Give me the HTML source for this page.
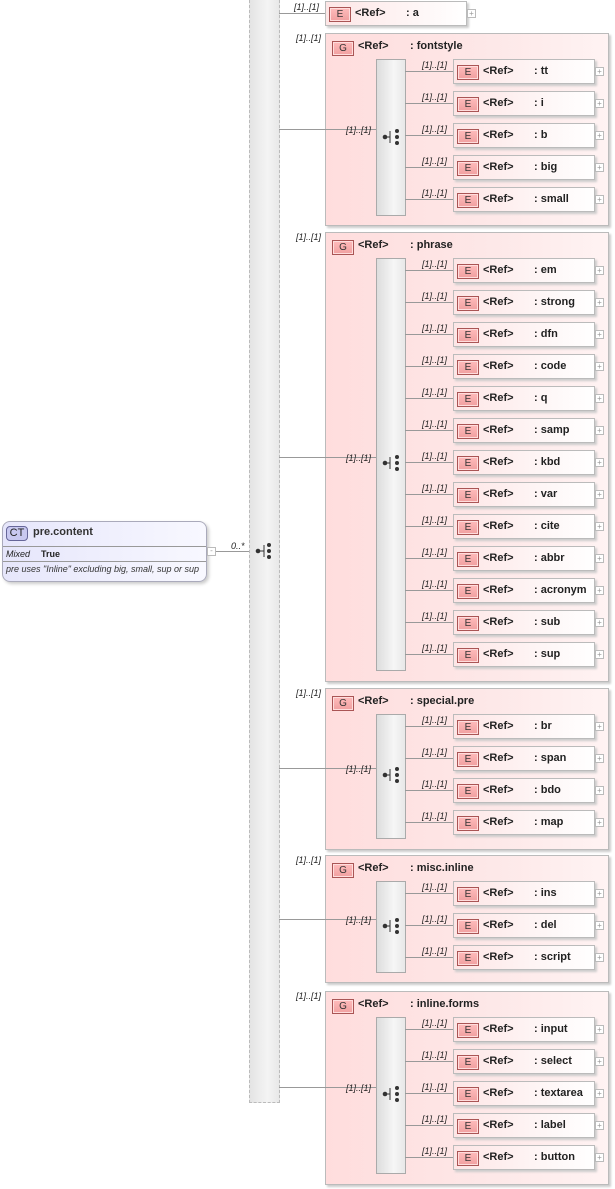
<!DOCTYPE html>
<html><head><meta charset="utf-8"><style>
*{box-sizing:border-box;margin:0;padding:0}
body{width:615px;height:1189px;background:#fff;position:relative;overflow:hidden;font-family:"Liberation Sans",sans-serif;font-size:11px;color:#222}
.a{position:absolute}
.lbl{position:absolute;font-style:italic;font-size:9px;color:#222;white-space:nowrap}
.hl{position:absolute;height:1px;background:#999}
.el{position:absolute;width:142px;height:25px;border:1px solid #bbb;background:linear-gradient(90deg,#fde6e6,#fff);box-shadow:2px 2px 2px #ccc}
.e{position:absolute;left:3px;top:5px;width:22px;height:15px;border:1px solid #a55;background:linear-gradient(#fbb,#f0a0a0);font-size:10px;text-align:center;line-height:13px;color:#333;box-shadow:inset 0 0 0 1px #fdd}
.r{position:absolute;left:29px;top:5px;font-weight:bold}
.n{position:absolute;left:80px;top:5px;font-weight:bold}
.pl{position:absolute;width:9px;height:9px;border:1px solid #bbb;background:#fff;font-size:8px;line-height:7px;text-align:center;color:#999}
.row{position:absolute;left:405px;width:210px;height:26px}
.row .hl{left:0;top:12px;width:48px}
.row .lbl{left:17px;top:1px}
.row .el{left:48px;top:0}
.row .pl{left:190px;top:8px}
.grp{position:absolute;left:325px;width:284px;border:1px solid #bbb;background:linear-gradient(90deg,#fdd 0%,#fde8e8 60%,#fff3f3 100%);box-shadow:2px 2px 2px #ccc}
.grp .g{left:6px;top:7px}
.grp .r{left:32px;top:6px}
.grp .n{left:84px;top:6px}
.bar{position:absolute;left:50px;width:30px;border:1px solid #aaa;background:linear-gradient(90deg,#ddd,#f6f6f6 60%,#e8e8e8)}
svg.ic{position:absolute}
</style></head><body>
<div class="a" style="left:249px;top:0;width:31px;height:1103px;border:1px dashed #bbb;border-top:none;background:linear-gradient(90deg,#e4e4e4,#f4f4f4 60%,#e8e8e8)"></div>
<svg class="ic" style="left:254px;top:543px" width="20" height="16"><circle cx="4" cy="8" r="2.3" fill="#333"/><path d="M4 8H10M10 2V14" stroke="#333" stroke-width="1"/><circle cx="15" cy="2" r="2" fill="#333"/><circle cx="15" cy="8" r="2" fill="#333"/><circle cx="15" cy="14" r="2" fill="#333"/></svg>
<div class="a" style="left:2px;top:521px;width:205px;height:61px;border:1px solid #aab;border-radius:8px;background:linear-gradient(90deg,#e6e6fb,#f8f8ff);box-shadow:2px 2px 3px #ccc"></div>
<div class="a" style="left:6px;top:526px;width:22px;height:15px;border:1px solid #669;border-radius:4px;background:#c8c8f0;font-size:11px;text-align:center;line-height:13px">CT</div>
<div class="a" style="left:33px;top:526px;font-weight:bold;font-size:11px;color:#333">pre.content</div>
<div class="a" style="left:3px;top:546px;width:203px;height:1px;background:#999"></div>
<div class="a" style="left:6px;top:549px;font-style:italic;font-size:9px">Mixed</div>
<div class="a" style="left:41px;top:549px;font-weight:bold;font-size:9px">True</div>
<div class="a" style="left:3px;top:561px;width:203px;height:1px;background:#999"></div>
<div class="a" style="left:6px;top:564px;font-style:italic;font-size:9px;color:#333">pre uses "Inline" excluding big, small, sup or sup</div>
<div class="pl" style="left:207px;top:547px;line-height:5px">-</div>
<div class="hl" style="left:216px;top:551px;width:33px"></div>
<div class="lbl" style="left:231px;top:541px">0..*</div>

<div class="hl" style="left:279px;top:13px;width:46px"></div>
<div class="lbl" style="left:294px;top:2px">[1]..[1]</div>
<div class="el" style="left:325px;top:1px"><span class="e">E</span><b class="r">&lt;Ref&gt;</b><b class="n">: a</b></div>
<div class="pl" style="left:467px;top:9px">+</div>

<div class="lbl" style="left:296px;top:33px">[1]..[1]</div>
<div class="grp" style="top:33px;height:193px"><span class="e g">G</span><b class="r">&lt;Ref&gt;</b><b class="n">: fontstyle</b><div class="bar" style="top:25px;height:157px"></div></div>
<div class="hl" style="left:279px;top:129px;width:97px"></div><div class="lbl" style="left:346px;top:125px">[1]..[1]</div>
<svg class="ic" style="left:381px;top:129px" width="20" height="16"><circle cx="4" cy="8" r="2.3" fill="#333"/><path d="M4 8H9M9 2V14" stroke="#333"/><circle cx="16" cy="2" r="2" fill="#333"/><circle cx="16" cy="8" r="2" fill="#333"/><circle cx="16" cy="14" r="2" fill="#333"/></svg>
<div class="row" style="top:59px"><div class="hl"></div><div class="lbl">[1]..[1]</div><div class="el"><span class="e">E</span><b class="r">&lt;Ref&gt;</b><b class="n">: tt</b></div><div class="pl">+</div></div>
<div class="row" style="top:91px"><div class="hl"></div><div class="lbl">[1]..[1]</div><div class="el"><span class="e">E</span><b class="r">&lt;Ref&gt;</b><b class="n">: i</b></div><div class="pl">+</div></div>
<div class="row" style="top:123px"><div class="hl"></div><div class="lbl">[1]..[1]</div><div class="el"><span class="e">E</span><b class="r">&lt;Ref&gt;</b><b class="n">: b</b></div><div class="pl">+</div></div>
<div class="row" style="top:155px"><div class="hl"></div><div class="lbl">[1]..[1]</div><div class="el"><span class="e">E</span><b class="r">&lt;Ref&gt;</b><b class="n">: big</b></div><div class="pl">+</div></div>
<div class="row" style="top:187px"><div class="hl"></div><div class="lbl">[1]..[1]</div><div class="el"><span class="e">E</span><b class="r">&lt;Ref&gt;</b><b class="n">: small</b></div><div class="pl">+</div></div>

<div class="lbl" style="left:296px;top:232px">[1]..[1]</div>
<div class="grp" style="top:232px;height:450px"><span class="e g">G</span><b class="r">&lt;Ref&gt;</b><b class="n">: phrase</b><div class="bar" style="top:25px;height:413px"></div></div>
<div class="hl" style="left:279px;top:457px;width:97px"></div><div class="lbl" style="left:346px;top:453px">[1]..[1]</div>
<svg class="ic" style="left:381px;top:455px" width="20" height="16"><circle cx="4" cy="8" r="2.3" fill="#333"/><path d="M4 8H9M9 2V14" stroke="#333"/><circle cx="16" cy="2" r="2" fill="#333"/><circle cx="16" cy="8" r="2" fill="#333"/><circle cx="16" cy="14" r="2" fill="#333"/></svg>
<div class="row" style="top:258px"><div class="hl"></div><div class="lbl">[1]..[1]</div><div class="el"><span class="e">E</span><b class="r">&lt;Ref&gt;</b><b class="n">: em</b></div><div class="pl">+</div></div>
<div class="row" style="top:290px"><div class="hl"></div><div class="lbl">[1]..[1]</div><div class="el"><span class="e">E</span><b class="r">&lt;Ref&gt;</b><b class="n">: strong</b></div><div class="pl">+</div></div>
<div class="row" style="top:322px"><div class="hl"></div><div class="lbl">[1]..[1]</div><div class="el"><span class="e">E</span><b class="r">&lt;Ref&gt;</b><b class="n">: dfn</b></div><div class="pl">+</div></div>
<div class="row" style="top:354px"><div class="hl"></div><div class="lbl">[1]..[1]</div><div class="el"><span class="e">E</span><b class="r">&lt;Ref&gt;</b><b class="n">: code</b></div><div class="pl">+</div></div>
<div class="row" style="top:386px"><div class="hl"></div><div class="lbl">[1]..[1]</div><div class="el"><span class="e">E</span><b class="r">&lt;Ref&gt;</b><b class="n">: q</b></div><div class="pl">+</div></div>
<div class="row" style="top:418px"><div class="hl"></div><div class="lbl">[1]..[1]</div><div class="el"><span class="e">E</span><b class="r">&lt;Ref&gt;</b><b class="n">: samp</b></div><div class="pl">+</div></div>
<div class="row" style="top:450px"><div class="hl"></div><div class="lbl">[1]..[1]</div><div class="el"><span class="e">E</span><b class="r">&lt;Ref&gt;</b><b class="n">: kbd</b></div><div class="pl">+</div></div>
<div class="row" style="top:482px"><div class="hl"></div><div class="lbl">[1]..[1]</div><div class="el"><span class="e">E</span><b class="r">&lt;Ref&gt;</b><b class="n">: var</b></div><div class="pl">+</div></div>
<div class="row" style="top:514px"><div class="hl"></div><div class="lbl">[1]..[1]</div><div class="el"><span class="e">E</span><b class="r">&lt;Ref&gt;</b><b class="n">: cite</b></div><div class="pl">+</div></div>
<div class="row" style="top:546px"><div class="hl"></div><div class="lbl">[1]..[1]</div><div class="el"><span class="e">E</span><b class="r">&lt;Ref&gt;</b><b class="n">: abbr</b></div><div class="pl">+</div></div>
<div class="row" style="top:578px"><div class="hl"></div><div class="lbl">[1]..[1]</div><div class="el"><span class="e">E</span><b class="r">&lt;Ref&gt;</b><b class="n">: acronym</b></div><div class="pl">+</div></div>
<div class="row" style="top:610px"><div class="hl"></div><div class="lbl">[1]..[1]</div><div class="el"><span class="e">E</span><b class="r">&lt;Ref&gt;</b><b class="n">: sub</b></div><div class="pl">+</div></div>
<div class="row" style="top:642px"><div class="hl"></div><div class="lbl">[1]..[1]</div><div class="el"><span class="e">E</span><b class="r">&lt;Ref&gt;</b><b class="n">: sup</b></div><div class="pl">+</div></div>

<div class="lbl" style="left:296px;top:688px">[1]..[1]</div>
<div class="grp" style="top:688px;height:162px"><span class="e g">G</span><b class="r">&lt;Ref&gt;</b><b class="n">: special.pre</b><div class="bar" style="top:25px;height:125px"></div></div>
<div class="hl" style="left:279px;top:768px;width:97px"></div><div class="lbl" style="left:346px;top:764px">[1]..[1]</div>
<svg class="ic" style="left:381px;top:767px" width="20" height="16"><circle cx="4" cy="8" r="2.3" fill="#333"/><path d="M4 8H9M9 2V14" stroke="#333"/><circle cx="16" cy="2" r="2" fill="#333"/><circle cx="16" cy="8" r="2" fill="#333"/><circle cx="16" cy="14" r="2" fill="#333"/></svg>
<div class="row" style="top:714px"><div class="hl"></div><div class="lbl">[1]..[1]</div><div class="el"><span class="e">E</span><b class="r">&lt;Ref&gt;</b><b class="n">: br</b></div><div class="pl">+</div></div>
<div class="row" style="top:746px"><div class="hl"></div><div class="lbl">[1]..[1]</div><div class="el"><span class="e">E</span><b class="r">&lt;Ref&gt;</b><b class="n">: span</b></div><div class="pl">+</div></div>
<div class="row" style="top:778px"><div class="hl"></div><div class="lbl">[1]..[1]</div><div class="el"><span class="e">E</span><b class="r">&lt;Ref&gt;</b><b class="n">: bdo</b></div><div class="pl">+</div></div>
<div class="row" style="top:810px"><div class="hl"></div><div class="lbl">[1]..[1]</div><div class="el"><span class="e">E</span><b class="r">&lt;Ref&gt;</b><b class="n">: map</b></div><div class="pl">+</div></div>

<div class="lbl" style="left:296px;top:855px">[1]..[1]</div>
<div class="grp" style="top:855px;height:128px"><span class="e g">G</span><b class="r">&lt;Ref&gt;</b><b class="n">: misc.inline</b><div class="bar" style="top:25px;height:92px"></div></div>
<div class="hl" style="left:279px;top:919px;width:97px"></div><div class="lbl" style="left:346px;top:915px">[1]..[1]</div>
<svg class="ic" style="left:381px;top:918px" width="20" height="16"><circle cx="4" cy="8" r="2.3" fill="#333"/><path d="M4 8H9M9 2V14" stroke="#333"/><circle cx="16" cy="2" r="2" fill="#333"/><circle cx="16" cy="8" r="2" fill="#333"/><circle cx="16" cy="14" r="2" fill="#333"/></svg>
<div class="row" style="top:881px"><div class="hl"></div><div class="lbl">[1]..[1]</div><div class="el"><span class="e">E</span><b class="r">&lt;Ref&gt;</b><b class="n">: ins</b></div><div class="pl">+</div></div>
<div class="row" style="top:913px"><div class="hl"></div><div class="lbl">[1]..[1]</div><div class="el"><span class="e">E</span><b class="r">&lt;Ref&gt;</b><b class="n">: del</b></div><div class="pl">+</div></div>
<div class="row" style="top:945px"><div class="hl"></div><div class="lbl">[1]..[1]</div><div class="el"><span class="e">E</span><b class="r">&lt;Ref&gt;</b><b class="n">: script</b></div><div class="pl">+</div></div>

<div class="lbl" style="left:296px;top:991px">[1]..[1]</div>
<div class="grp" style="top:991px;height:194px"><span class="e g">G</span><b class="r">&lt;Ref&gt;</b><b class="n">: inline.forms</b><div class="bar" style="top:25px;height:157px"></div></div>
<div class="hl" style="left:279px;top:1087px;width:97px"></div><div class="lbl" style="left:346px;top:1083px">[1]..[1]</div>
<svg class="ic" style="left:381px;top:1086px" width="20" height="16"><circle cx="4" cy="8" r="2.3" fill="#333"/><path d="M4 8H9M9 2V14" stroke="#333"/><circle cx="16" cy="2" r="2" fill="#333"/><circle cx="16" cy="8" r="2" fill="#333"/><circle cx="16" cy="14" r="2" fill="#333"/></svg>
<div class="row" style="top:1017px"><div class="hl"></div><div class="lbl">[1]..[1]</div><div class="el"><span class="e">E</span><b class="r">&lt;Ref&gt;</b><b class="n">: input</b></div><div class="pl">+</div></div>
<div class="row" style="top:1049px"><div class="hl"></div><div class="lbl">[1]..[1]</div><div class="el"><span class="e">E</span><b class="r">&lt;Ref&gt;</b><b class="n">: select</b></div><div class="pl">+</div></div>
<div class="row" style="top:1081px"><div class="hl"></div><div class="lbl">[1]..[1]</div><div class="el"><span class="e">E</span><b class="r">&lt;Ref&gt;</b><b class="n">: textarea</b></div><div class="pl">+</div></div>
<div class="row" style="top:1113px"><div class="hl"></div><div class="lbl">[1]..[1]</div><div class="el"><span class="e">E</span><b class="r">&lt;Ref&gt;</b><b class="n">: label</b></div><div class="pl">+</div></div>
<div class="row" style="top:1145px"><div class="hl"></div><div class="lbl">[1]..[1]</div><div class="el"><span class="e">E</span><b class="r">&lt;Ref&gt;</b><b class="n">: button</b></div><div class="pl">+</div></div>
</body></html>
